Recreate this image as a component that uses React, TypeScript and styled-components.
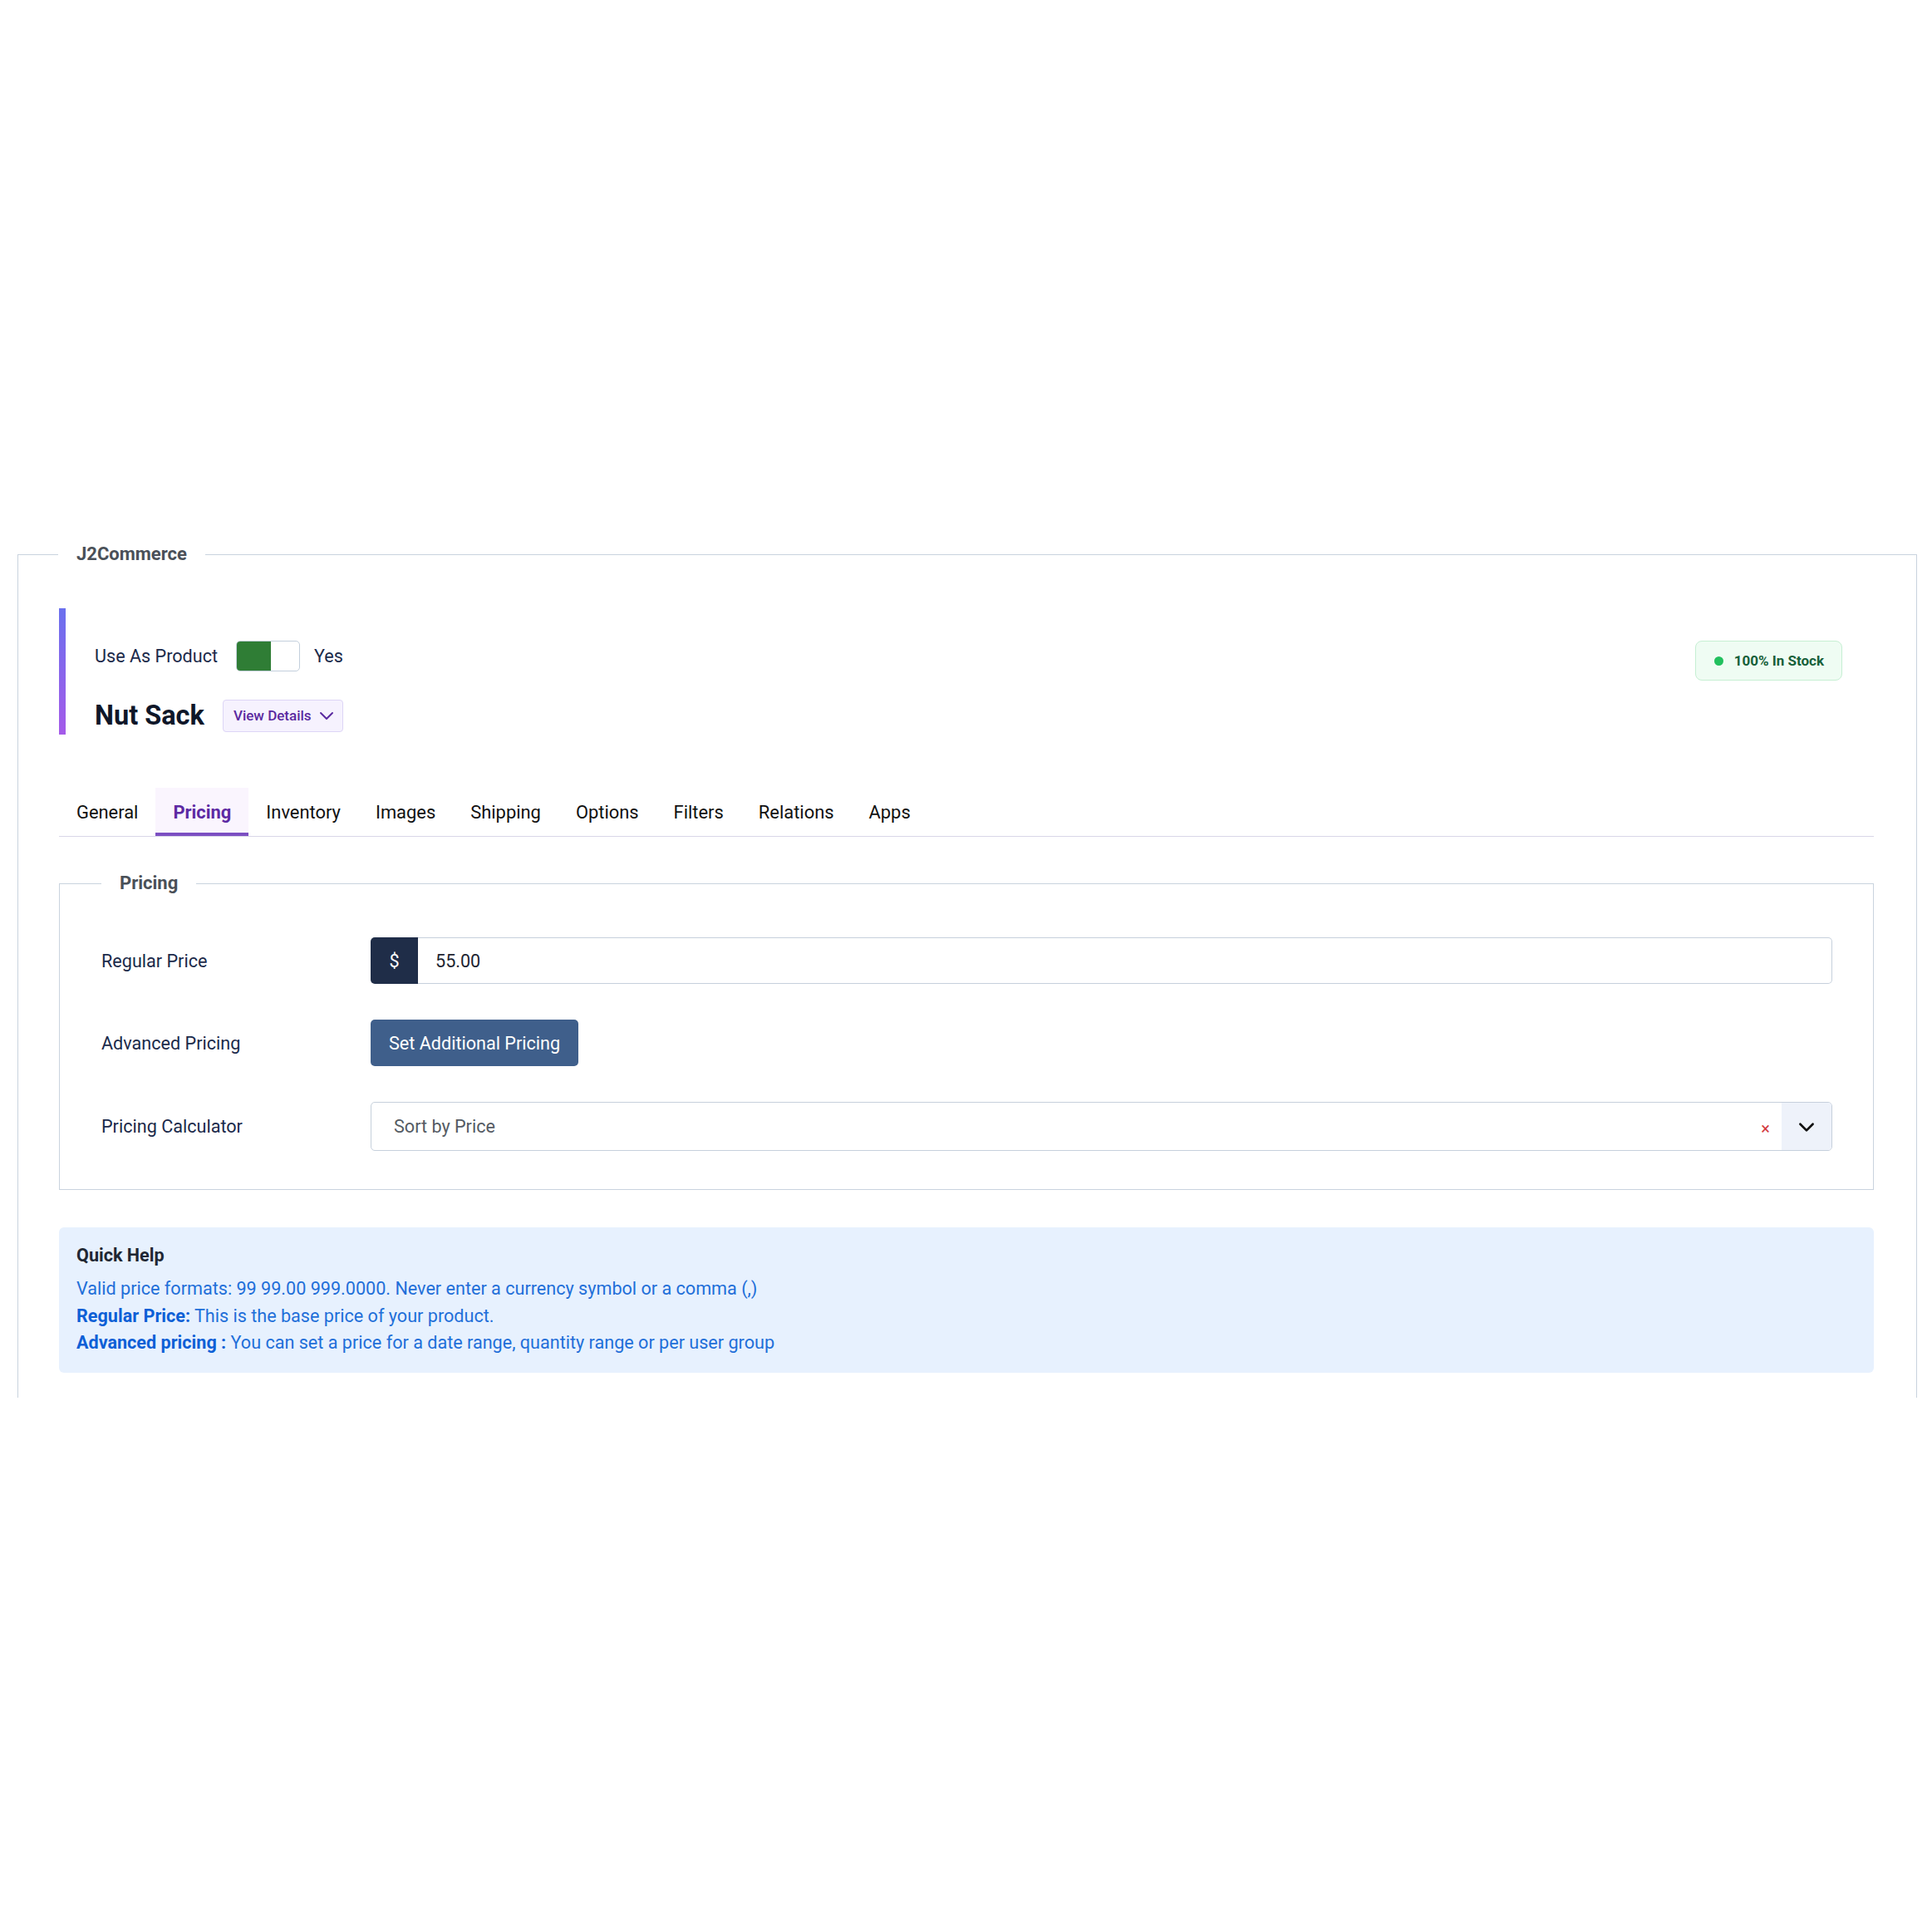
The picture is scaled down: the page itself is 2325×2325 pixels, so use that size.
import React from 'react';
import styled, { createGlobalStyle } from 'styled-components';

const GlobalStyle = createGlobalStyle`
  body {
    margin: 0;
    background: #fff;
    font-family: Roboto, "Liberation Sans", sans-serif;
  }
`;

const Page = styled.div`
  padding: 652px 18px 0 21px;
`;

/* outer J2Commerce box */
const Panel = styled.fieldset`
  margin: 0;
  min-width: 0;
  padding: 0 51px 30px 49px;
  border: 1px solid #c9d3de;
  border-bottom: none;
`;

const Legend = styled.legend<{ $shift?: number }>`
  margin-left: ${(p) => p.$shift ?? 0}px;
  padding: 0 22px;
  font-size: 22px;
  line-height: 30px;
  font-weight: 700;
  color: #4a5058;
`;

/* product header with the accent bar */
const Header = styled.div`
  margin-top: 50px;
  display: flex;
  justify-content: space-between;
  align-items: flex-start;
  padding: 39px 38px 1px 35px;
  border-left: 8px solid;
  border-image: linear-gradient(180deg, #6a70ee 0%, #a55ae9 100%) 1;
`;

const HeaderMain = styled.div`
  display: flex;
  flex-direction: column;
`;

const ToggleRow = styled.div`
  display: flex;
  align-items: center;
  height: 37px;
  font-size: 21.6px;
  color: #1b2a4a;
`;

const Switch = styled.span`
  display: flex;
  width: 77px;
  height: 37px;
  box-sizing: border-box;
  margin: 0 17px 0 22px;
  border: 1px solid #c3cfdc;
  border-radius: 5px;
  overflow: hidden;
  background: #fff;
`;

const SwitchOn = styled.span`
  width: 41px;
  background: #2f7d35;
`;

const TitleRow = styled.div`
  display: flex;
  align-items: center;
  height: 44px;
  margin-top: 31px;
`;

const Title = styled.h2`
  margin: 0;
  font-size: 32.5px;
  font-weight: 700;
  color: #0f1729;
`;

const DetailsButton = styled.button`
  display: flex;
  align-items: center;
  gap: 6px;
  height: 39px;
  margin-left: 22px;
  padding: 0 7px 0 12px;
  border: 1px solid #ddd5f6;
  border-radius: 4px;
  background: #f6f2fe;
  color: #5b2aa0;
  font-family: inherit;
  font-size: 17px;
  font-weight: 500;
`;

const StockBadge = styled.div`
  display: flex;
  align-items: center;
  gap: 13px;
  height: 48px;
  box-sizing: border-box;
  padding: 0 21px 0 22px;
  border: 1px solid #c6efd3;
  border-radius: 8px;
  background: #effcf3;
  color: #17603a;
  font-size: 17px;
  font-weight: 700;
`;

const Dot = styled.span`
  width: 11px;
  height: 11px;
  border-radius: 50%;
  background: #22c05e;
`;

/* tabs */
const Tabs = styled.div`
  display: flex;
  margin-top: 64px;
  border-bottom: 1px solid #d9d6e8;
`;

const Tab = styled.div<{ $active?: boolean }>`
  display: flex;
  align-items: center;
  height: 58px;
  box-sizing: border-box;
  padding: 4px 21px 0;
  border-bottom: 4px solid ${(p) => (p.$active ? '#7c4fc2' : 'transparent')};
  background: ${(p) => (p.$active ? '#faf5fe' : 'transparent')};
  color: ${(p) => (p.$active ? '#5d2aa3' : '#111')};
  font-size: 21.9px;
  font-weight: ${(p) => (p.$active ? 700 : 400)};
`;

/* pricing form */
const Section = styled.fieldset`
  margin: 41px 0 0;
  min-width: 0;
  padding: 0 49px 46px 50px;
  border: 1px solid #c9d3de;
`;

const Rows = styled.div`
  display: flex;
  flex-direction: column;
  gap: 43px;
  margin-top: 50px;
`;

const Row = styled.div`
  display: grid;
  grid-template-columns: 324px 1fr;
  align-items: center;
`;

const Label = styled.div`
  font-size: 21.6px;
  color: #1b2a4a;
`;

const InputGroup = styled.div`
  display: flex;
  height: 56px;
`;

const Addon = styled.span`
  display: flex;
  align-items: center;
  justify-content: center;
  width: 57px;
  border-radius: 5px 0 0 5px;
  background: #1f2d48;
  color: #fff;
  font-size: 21.6px;
`;

const TextInput = styled.div`
  flex: 1;
  display: flex;
  align-items: center;
  padding-left: 21px;
  border: 1px solid #c6d0dc;
  border-left: none;
  border-radius: 0 5px 5px 0;
  font-size: 21.6px;
  color: #1d2430;
`;

const ActionButton = styled.button`
  justify-self: start;
  height: 56px;
  padding: 0 22px;
  border: none;
  border-radius: 5px;
  background: #3f5f8b;
  color: #fff;
  font-family: inherit;
  font-size: 21.6px;
`;

const Select = styled.div`
  display: flex;
  height: 59px;
  box-sizing: border-box;
  border: 1px solid #c6d0dc;
  border-radius: 5px;
  overflow: hidden;
`;

const SelectValue = styled.div`
  flex: 1;
  display: flex;
  align-items: center;
  padding-left: 27px;
  font-size: 21.6px;
  color: #555b63;
`;

const Clear = styled.span`
  display: flex;
  align-items: center;
  padding: 4px 14px 0;
  color: #d33a40;
  font-size: 20px;
`;

const SelectArrow = styled.span`
  display: flex;
  align-items: center;
  justify-content: center;
  width: 60px;
  background: #eef2fa;
`;

/* help box */
const Help = styled.div`
  margin-top: 45px;
  padding: 19px 21px 19.5px;
  border-radius: 6px;
  background: #e7f1fe;
`;

const HelpTitle = styled.div`
  margin-bottom: 9px;
  font-size: 21.6px;
  line-height: 30px;
  font-weight: 700;
  color: #1f2733;
`;

const HelpLine = styled.div`
  font-size: 21.6px;
  line-height: 32.5px;
  color: #1f6fd9;

  b {
    color: #0d5fd6;
  }
`;

const ChevronDown = ({ size, color, width }: { size: number; color: string; width: number }) => (
  <svg width={size} height={size} viewBox="0 0 24 24" fill="none" stroke={color} strokeWidth={width} strokeLinecap="round" strokeLinejoin="round">
    <polyline points="5 9 12 16 19 9" />
  </svg>
);

const tabs = ['General', 'Pricing', 'Inventory', 'Images', 'Shipping', 'Options', 'Filters', 'Relations', 'Apps'];

const App = () => (
  <Page>
    <GlobalStyle />
    <Panel>
      <Legend $shift={-1}>J2Commerce</Legend>

      <Header>
        <HeaderMain>
          <ToggleRow>
            Use As Product
            <Switch>
              <SwitchOn />
            </Switch>
            Yes
          </ToggleRow>
          <TitleRow>
            <Title>Nut Sack</Title>
            <DetailsButton>
              View Details
              <ChevronDown size={24} color="#5b2aa0" width={2} />
            </DetailsButton>
          </TitleRow>
        </HeaderMain>
        <StockBadge>
          <Dot />
          100% In Stock
        </StockBadge>
      </Header>

      <Tabs>
        {tabs.map((t) => (
          <Tab key={t} $active={t === 'Pricing'}>
            {t}
          </Tab>
        ))}
      </Tabs>

      <Section>
        <Legend>Pricing</Legend>
        <Rows>
          <Row>
            <Label>Regular Price</Label>
            <InputGroup>
              <Addon>$</Addon>
              <TextInput>55.00</TextInput>
            </InputGroup>
          </Row>
          <Row>
            <Label>Advanced Pricing</Label>
            <ActionButton>Set Additional Pricing</ActionButton>
          </Row>
          <Row>
            <Label>Pricing Calculator</Label>
            <Select>
              <SelectValue>Sort by Price</SelectValue>
              <Clear>×</Clear>
              <SelectArrow>
                <ChevronDown size={26} color="#111" width={2.5} />
              </SelectArrow>
            </Select>
          </Row>
        </Rows>
      </Section>

      <Help>
        <HelpTitle>Quick Help</HelpTitle>
        <HelpLine>Valid price formats: 99 99.00 999.0000. Never enter a currency symbol or a comma (,)</HelpLine>
        <HelpLine>
          <b>Regular Price:</b> This is the base price of your product.
        </HelpLine>
        <HelpLine>
          <b>Advanced pricing :</b> You can set a price for a date range, quantity range or per user group
        </HelpLine>
      </Help>
    </Panel>
  </Page>
);

export default App;
